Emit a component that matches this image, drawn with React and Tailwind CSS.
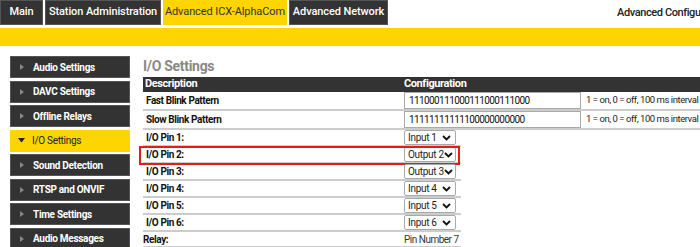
import React from 'react';

const tabs = [
    { label: 'Main', w: 'w-[43px]' },
    { label: 'Station Administration', w: 'w-[116px]' },
    { label: 'Advanced ICX-AlphaCom', w: 'w-[124px]', active: true },
    { label: 'Advanced Network', w: 'w-[99px]' },
];

const menu = [
    'Audio Settings',
    'DAVC Settings',
    'Offline Relays',
    'I/O Settings',
    'Sound Detection',
    'RTSP and ONVIF',
    'Time Settings',
    'Audio Messages',
];

const pins = [
    { label: 'I/O Pin 1:', value: 'Input 1' },
    { label: 'I/O Pin 2:', value: 'Output 2', marked: true },
    { label: 'I/O Pin 3:', value: 'Output 3' },
    { label: 'I/O Pin 4:', value: 'Input 4' },
    { label: 'I/O Pin 5:', value: 'Input 5' },
    { label: 'I/O Pin 6:', value: 'Input 6' },
];

function Chevron() {
    return (
        <svg width="9" height="6" viewBox="0 0 9 6" className="shrink-0">
            <path d="M1 1 L4.5 4.5 L8 1" fill="none" stroke="#111" strokeWidth="1.8" />
        </svg>
    );
}

function FakeSelect({ value }) {
    return (
        <div className="w-[52px] h-[15px] shrink-0 border border-[#a9a9a9] rounded-[2px] bg-white flex items-center justify-between pl-[3px] pr-[4px] text-[10px] tracking-[-0.3px] text-[#222] whitespace-nowrap">
            <span>{value}</span>
            <Chevron />
        </div>
    );
}

export default function App() {
    return (
        <div className="w-[700px] h-[247px] overflow-hidden bg-white font-['Roboto',sans-serif]">
            {/* top tabs */}
            <div className="flex h-[26px] gap-[2px]">
                {tabs.map((t) => (
                    <div
                        key={t.label}
                        className={`${t.w} h-[25px] shrink-0 flex items-center justify-center text-[11px] tracking-[-0.1px] whitespace-nowrap ${
                            t.active
                                ? 'bg-[#fed500] text-[#333]'
                                : 'bg-[#333] text-white font-medium border border-[#555]'
                        }`}
                    >
                        {t.label}
                    </div>
                ))}
                <div className="flex-1 overflow-hidden">
                    <div className="pl-[227px] pt-[5px] text-[11px] tracking-[-0.4px] font-medium text-[#222] whitespace-nowrap">
                        Advanced Configuration
                    </div>
                </div>
            </div>
            <div className="h-[18px] mt-[2px] bg-[#fed500]" />

            <div className="flex pt-[10px] pl-[10px]">
                {/* sidebar */}
                <div className="w-[120px] flex flex-col gap-[2.5px] shrink-0">
                    {menu.map((m) => {
                        const active = m === 'I/O Settings';
                        return (
                            <div
                                key={m}
                                className={`h-[22px] flex items-center text-[10px] tracking-[-0.3px] whitespace-nowrap ${
                                    active
                                        ? 'bg-[#fed500] text-[#222]'
                                        : 'bg-[#333] text-white font-bold border border-[#555]'
                                }`}
                            >
                                <span className="w-[22px] flex justify-center">
                                    {active ? (
                                        <svg width="7" height="5" viewBox="0 0 7 5">
                                            <path d="M0 0 L7 0 L3.5 4.5 Z" fill="#222" />
                                        </svg>
                                    ) : (
                                        <svg width="4" height="6" viewBox="0 0 4 6">
                                            <path d="M0 0 L4 3 L0 6 Z" fill="#888" />
                                        </svg>
                                    )}
                                </span>
                                {m}
                            </div>
                        );
                    })}
                </div>

                {/* content */}
                <div className="ml-[13px] flex-1">
                    <div className="h-[20px] text-[14px] font-bold text-[#888] leading-[20px] tracking-[-0.3px]">
                        I/O Settings
                    </div>
                    <div className="h-[15px] mt-[1px] bg-[#333] text-white text-[11px] font-bold tracking-[-0.4px] flex items-center">
                        <div className="w-[261px] shrink-0 pl-[2px]">Description</div>
                        <div>Configuration</div>
                    </div>

                    {['111000111000111000111000', '11111111111100000000000'].map((v, i) => (
                        <div key={i} className="h-[19px] border-b-2 border-[#ccc] flex items-center text-[10px] whitespace-nowrap">
                            <div className="w-[261px] shrink-0 pl-[3px] font-bold text-[#111] tracking-[-0.4px]">
                                {i === 0 ? 'Fast Blink Pattern' : 'Slow Blink Pattern'}
                            </div>
                            <div className="w-[177px] h-[17px] shrink-0 border border-[#aaa] bg-white flex items-center pl-[4px] text-[#111] tracking-[-0.6px] overflow-hidden">
                                {v}
                            </div>
                            <div className="pl-[5px] text-[9.5px] text-[#222] tracking-[-0.45px]">1 = on, 0 = off, 100 ms interval</div>
                        </div>
                    ))}

                    {pins.map((p) => (
                        <div key={p.label} className="relative h-[17px] w-[318px] border-b-2 border-[#ccc] flex items-center text-[10px] whitespace-nowrap">
                            <div className="w-[261px] shrink-0 pl-[3px] font-bold text-[#111] tracking-[-0.4px]">{p.label}</div>
                            <FakeSelect value={p.value} />
                            {p.marked && (
                                <div className="absolute left-[-4px] top-[-1px] w-[321px] h-[19px] border-2 border-[#e31b1b]" />
                            )}
                        </div>
                    ))}

                    <div className="h-[16px] w-[318px] border-b-2 border-[#ccc] flex items-center text-[10px] whitespace-nowrap">
                        <div className="w-[261px] shrink-0 font-bold text-[#111] tracking-[-0.4px]">Relay:</div>
                        <div className="text-[#333] tracking-[-0.5px]">Pin Number 7</div>
                    </div>
                </div>
            </div>
        </div>
    );
}
